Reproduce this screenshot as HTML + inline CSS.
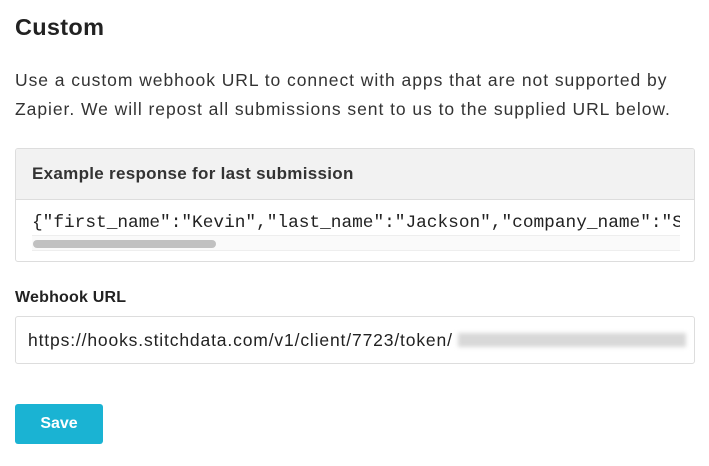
<!DOCTYPE html>
<html><head><style>
body{margin:0;background:#fff;font-family:"Liberation Sans",sans-serif;color:#333;width:709px;height:466px;overflow:hidden;position:relative}
.a{position:absolute}
</style></head><body>
<div class="a" style="left:15px;top:14px;font-size:23.5px;font-weight:bold;color:#222;letter-spacing:0.3px">Custom</div>
<div class="a" style="left:15px;top:66px;font-size:17.5px;line-height:29px;color:#333;width:680px;letter-spacing:0.95px">Use a custom webhook URL to connect with apps that are not supported by Zapier. We will repost all submissions sent to us to the supplied URL below.</div>
<div class="a" style="left:15px;top:148px;width:678px;height:112px;border:1px solid #ddd;border-radius:3px;overflow:hidden">
 <div style="height:50px;background:#f2f2f2;border-bottom:1px solid #ddd;font-size:17px;font-weight:bold;color:#333;line-height:50px;padding-left:16px;letter-spacing:0.3px">Example response for last submission</div>
 <div class="a" style="left:16px;top:64px;width:648px;white-space:nowrap;overflow:hidden;font-family:'Liberation Mono',monospace;font-size:17.8px;color:#222">{"first_name":"Kevin","last_name":"Jackson","company_name":"Stitch"}</div>
 <div class="a" style="left:16px;top:86px;width:648px;height:14px;background:#fafafa;border-top:1px solid #eee;border-bottom:1px solid #eee"></div>
 <div class="a" style="left:17px;top:91px;width:183px;height:8px;background:#c1c1c1;border-radius:4px"></div>
</div>
<div class="a" style="left:15px;top:289px;font-size:16px;font-weight:bold;color:#222;letter-spacing:0.2px">Webhook URL</div>
<div class="a" style="left:15px;top:316px;width:678px;height:46px;border:1px solid #ddd;border-radius:3px">
 <div class="a" style="left:12px;top:13px;font-size:17.5px;color:#222;white-space:nowrap;letter-spacing:0.85px">https://hooks.stitchdata.com/v1/client/7723/token/</div>
 <div class="a" style="left:442px;top:16px;width:228px;height:14px;background:#d8d8d8;filter:blur(2px)"></div>
</div>
<div class="a" style="left:15px;top:404px;width:88px;height:40px;background:#1ab3d3;border-radius:3px;color:#fff;font-weight:bold;font-size:16px;line-height:40px;text-align:center">Save</div>
</body></html>
